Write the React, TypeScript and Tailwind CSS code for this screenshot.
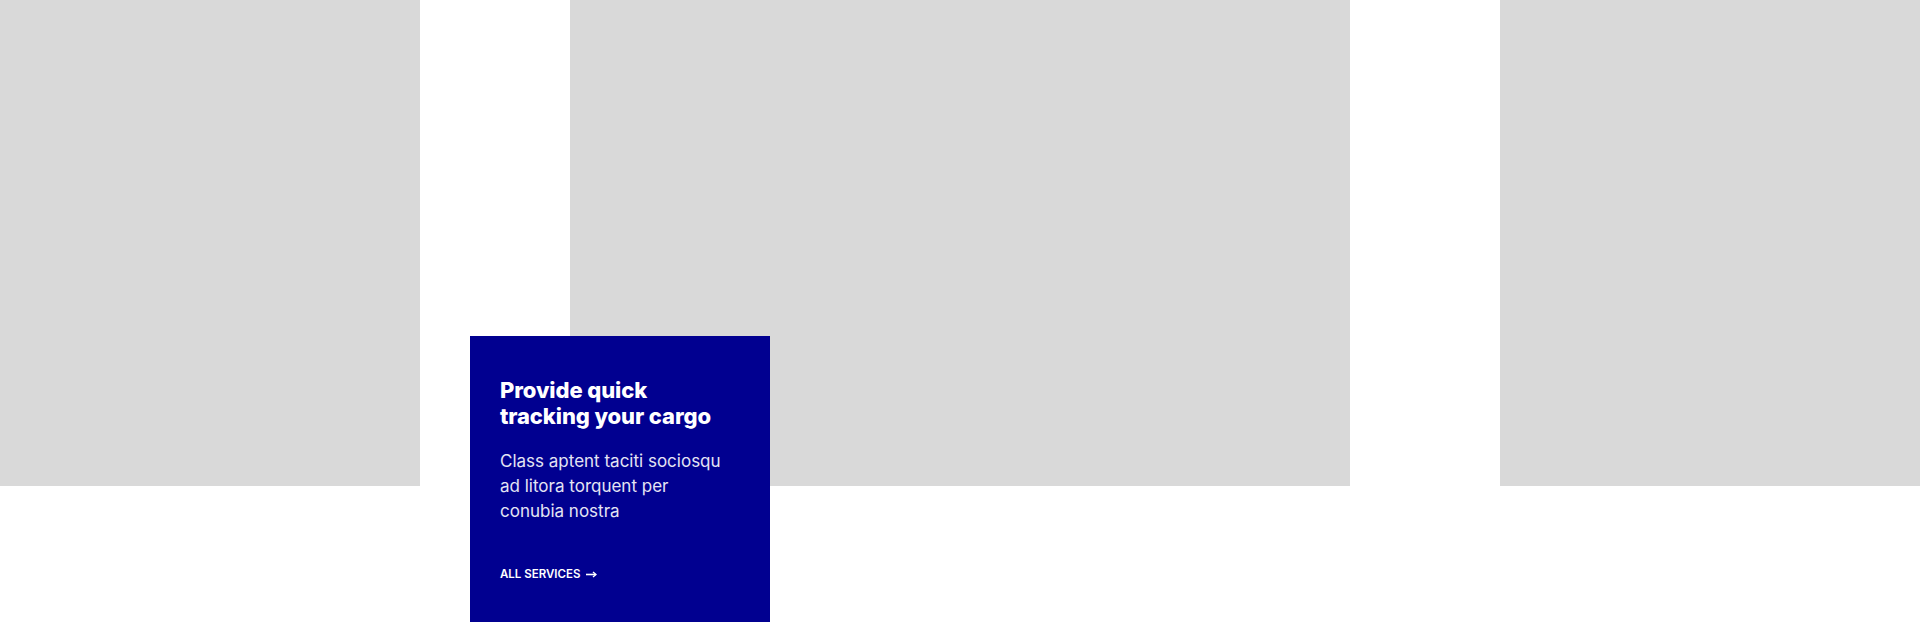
import React from "react";

export default function App() {
  return (
    <div className="relative h-[622px] w-[1920px] overflow-hidden bg-white">
      <div className="flex gap-[150px]">
        <div className="h-[486px] w-[420px] bg-[#d9d9d9]" />
        <div className="h-[486px] w-[780px] bg-[#d9d9d9]" />
        <div className="h-[486px] w-[420px] bg-[#d9d9d9]" />
      </div>
      <div className="absolute left-[470px] top-[336px] w-[300px] bg-[#010090] px-[30px] pb-[80px] pt-[41px]">
        <h3 className="font-['Inter',sans-serif] text-[22px] font-extrabold leading-[26px] tracking-[-0.1px] text-white">
          Provide quick
          <br />
          tracking your cargo
        </h3>
        <p className="mt-[20px] font-['Inter',sans-serif] text-[17px] font-normal leading-[25px] text-[#e4e4f4]">
          Class aptent taciti sociosqu
          <br />
          ad litora torquent per
          <br />
          conubia nostra
        </p>
        <a className="mt-[43px] flex items-center gap-[6px] font-['Inter',sans-serif] text-[11.5px] font-semibold leading-[14px] text-white" href="#">
          ALL SERVICES
          <svg width="11" height="7" viewBox="0 0 11 7" fill="none">
            <path d="M0 3.5H9.5" stroke="white" strokeWidth="1.6" />
            <path d="M7 1L10 3.5L7 6" stroke="white" strokeWidth="1.4" fill="none" />
          </svg>
        </a>
      </div>
    </div>
  );
}
